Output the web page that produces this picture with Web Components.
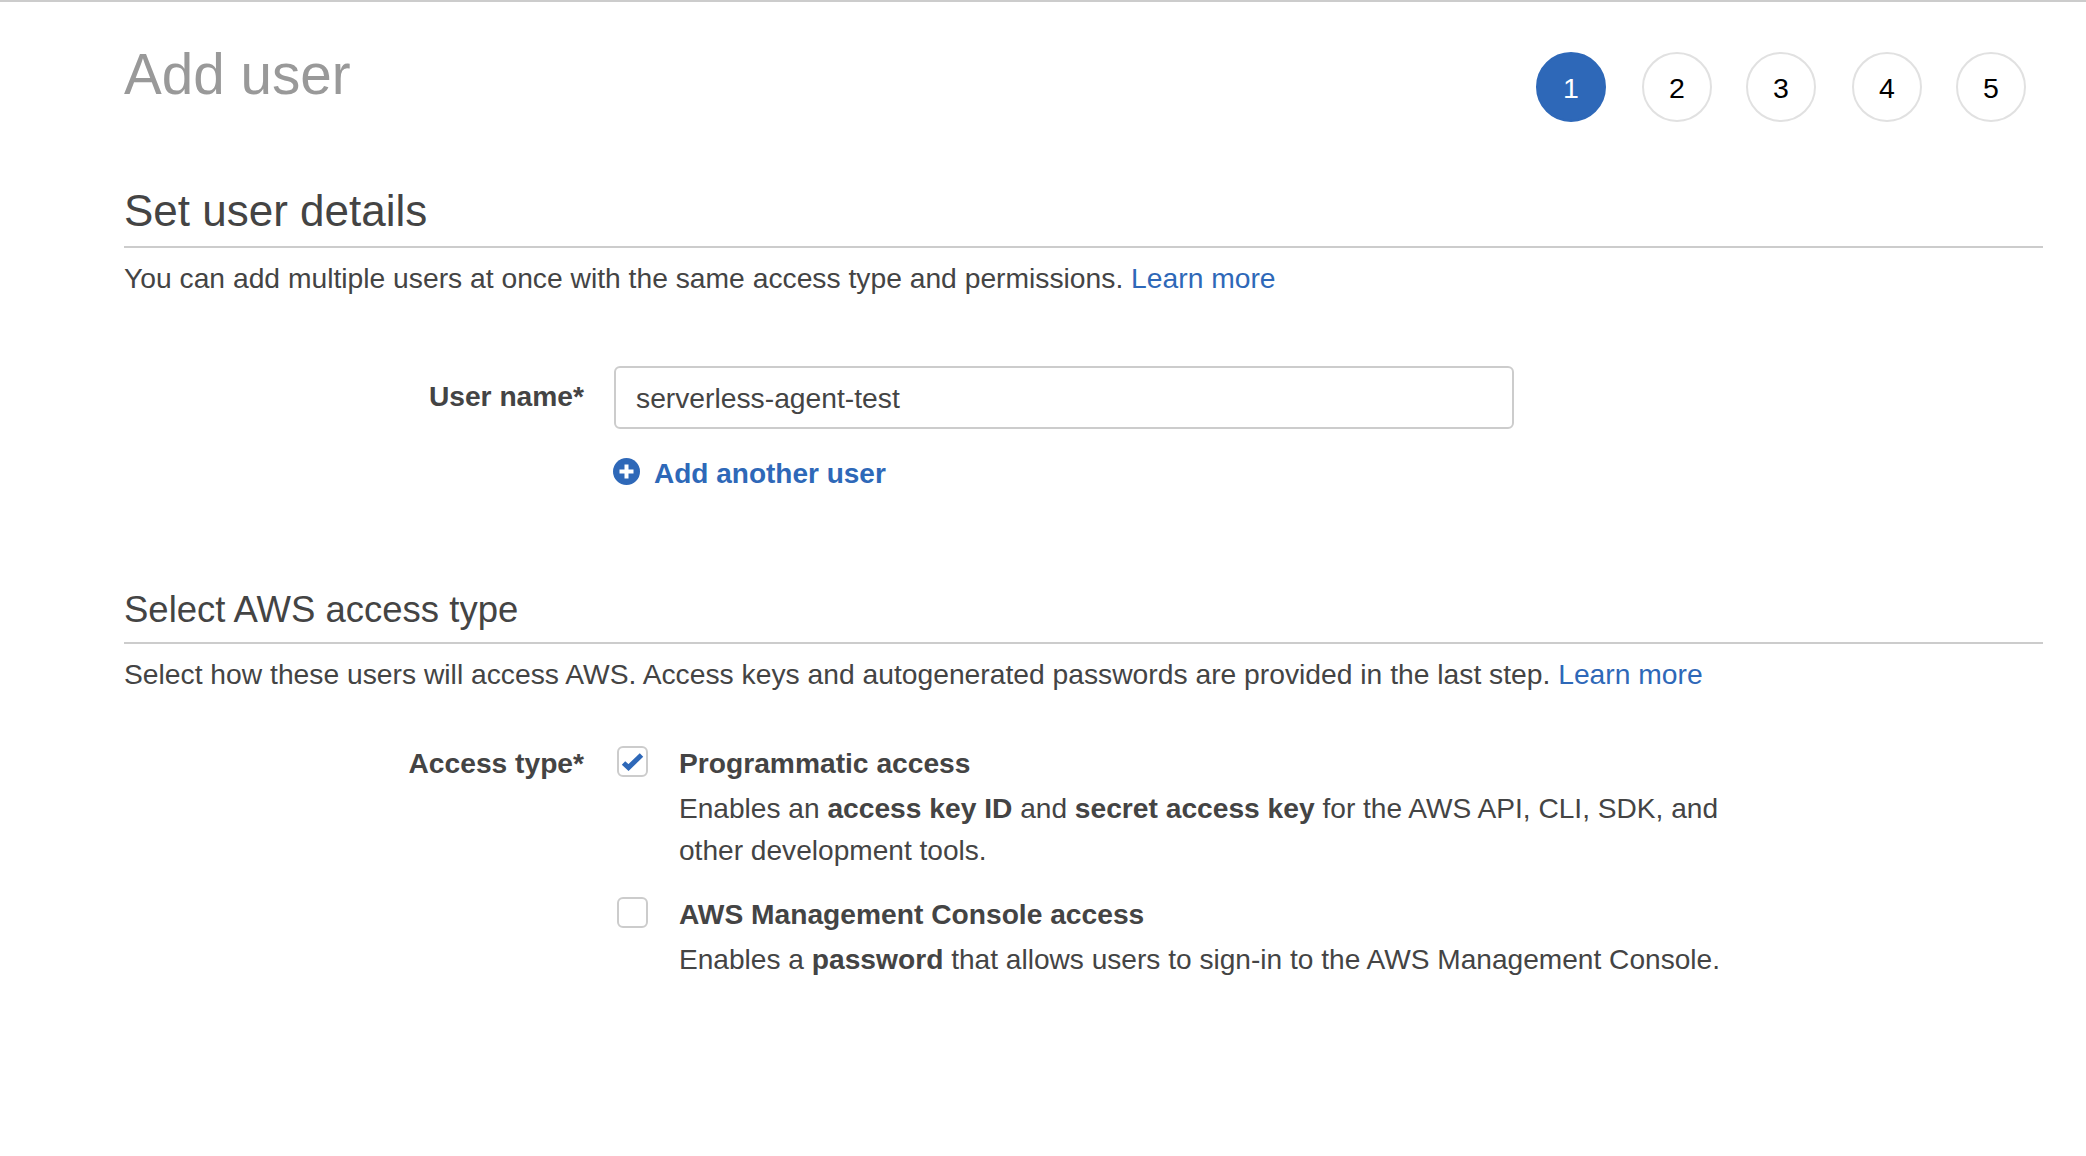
<!DOCTYPE html>
<html lang="en">
<head>
<meta charset="utf-8">
<title>Add user</title>
<style>
  html, body { margin: 0; background: #fff; }
  body { font: 28.25px/42px "Liberation Sans", Arial, sans-serif; color: #444; }
  b { font-weight: 700; font-size: 28.2px; }
</style>
</head>
<body>
<add-user-page>
  <page-header title-text="Add user" steps="5" current="1"></page-header>

  <section-head size="large" style="margin-top:63px">Set user details</section-head>
  <help-text>You can add multiple users at once with the same access type and permissions. <text-link>Learn more</text-link></help-text>

  <form-row label="User name*" style="margin-top:67px">
    <text-field>serverless-agent-test</text-field>
    <add-link>Add another user</add-link>
  </form-row>

  <section-head style="margin-top:90px">Select AWS access type</section-head>
  <help-text>Select how these users will access AWS. Access keys and autogenerated passwords are provided in the last step. <text-link>Learn more</text-link></help-text>

  <form-row label="Access type*" style="margin-top:39px">
    <check-option checked heading="Programmatic access">Enables an <b>access key ID</b> and <b>secret access key</b> for the AWS API, CLI, SDK, and<br>other development tools.</check-option>
    <check-option heading="AWS Management Console access">Enables a <b>password</b> that allows users to sign-in to the AWS Management Console.</check-option>
  </form-row>
</add-user-page>

<script>
class AddUserPage extends HTMLElement {
  constructor() {
    super()
    this.attachShadow({ mode: 'open' }).innerHTML = `
      <style>
        :host { display: block; border-top: 2px solid #ccc; padding: 0 43px 0 124px; min-height: 1154px; box-sizing: border-box; }
      </style>
      <slot></slot>`
  }
}

class PageHeader extends HTMLElement {
  connectedCallback() {
    const count = Number(this.getAttribute('steps'))
    const current = Number(this.getAttribute('current'))
    let steps = ''
    for (let i = 1; i <= count; i++) {
      steps += `<li class="${i === current ? 'on' : ''}">${i}</li>`
    }
    this.attachShadow({ mode: 'open' }).innerHTML = `
      <style>
        :host { display: flex; justify-content: space-between; align-items: flex-start; padding-right: 17px; }
        h1 { margin: 40px 0 0; font-size: 56.6px; line-height: 66px; font-weight: 400; color: #999; }
        ol { display: flex; gap: 35px; list-style: none; margin: 50px 0 0; padding: 0; }
        li { width: 70px; height: 70px; box-sizing: border-box; border: 2px solid #e1e1e1; border-radius: 50%; padding-top: 2px;
             display: flex; align-items: center; justify-content: center; font-size: 28.5px; color: #000; }
        li:nth-child(even) { margin: 0 -1px 0 1px; }
        li.on { background: #2e68b8; border-color: #2e68b8; color: #fff; }
      </style>
      <h1>${this.getAttribute('title-text')}</h1>
      <ol>${steps}</ol>`
  }
}

class SectionHead extends HTMLElement {
  constructor() {
    super()
    this.attachShadow({ mode: 'open' }).innerHTML = `
      <style>
        :host { display: block; border-bottom: 2px solid #ccc; padding-bottom: 8px; font-size: 36.5px; line-height: 49px; }
        :host([size="large"]) { font-size: 44px; line-height: 52px; padding-bottom: 9px; }
      </style>
      <slot></slot>`
  }
}

class HelpText extends HTMLElement {
  constructor() {
    super()
    this.attachShadow({ mode: 'open' }).innerHTML = `
      <style>:host { display: block; margin-top: 9px; }</style>
      <slot></slot>`
  }
}

class TextLink extends HTMLElement {
  constructor() {
    super()
    this.attachShadow({ mode: 'open' }).innerHTML = `
      <style>:host { color: #2e68b8; cursor: pointer; }</style>
      <slot></slot>`
  }
}

class FormRow extends HTMLElement {
  connectedCallback() {
    this.attachShadow({ mode: 'open' }).innerHTML = `
      <style>
        :host { display: grid; grid-template-columns: 460px 1fr; column-gap: 30px; }
        label { text-align: right; font-weight: 700; font-size: 28.2px; padding-top: 8px; }
        :host([label^="User"]) label { padding-top: 9px; }
      </style>
      <label>${this.getAttribute('label')}</label>
      <div><slot></slot></div>`
  }
}

class TextField extends HTMLElement {
  constructor() {
    super()
    this.attachShadow({ mode: 'open' }).innerHTML = `
      <style>
        :host { display: flex; align-items: center; width: 900px; height: 63px; box-sizing: border-box;
                border: 2px solid #ccc; border-radius: 6px; padding: 0 20px; }
      </style>
      <slot></slot>`
  }
}

class AddLink extends HTMLElement {
  constructor() {
    super()
    this.attachShadow({ mode: 'open' }).innerHTML = `
      <style>
        :host { display: flex; align-items: flex-start; gap: 14px; margin: 24px 0 0 -1px; color: #2e68b8; font-size: 28px; font-weight: 700; cursor: pointer; }
        svg { width: 27px; height: 27px; margin-top: 5px; flex: none; }
      </style>
      <svg viewBox="0 0 27 27"><circle cx="13.5" cy="13.5" r="13.5" fill="#2e68b8"/><path d="M13.5 6.5v14M6.5 13.5h14" stroke="#fff" stroke-width="4" fill="none"/></svg>
      <span><slot></slot></span>`
  }
}

class CheckOption extends HTMLElement {
  connectedCallback() {
    const mark = this.hasAttribute('checked')
      ? '<svg viewBox="0 0 31 31"><path d="M6.5 17l5 4.5L24.5 9" stroke="#2e68b8" stroke-width="5" fill="none"/></svg>'
      : ''
    this.attachShadow({ mode: 'open' }).innerHTML = `
      <style>
        :host { display: grid; grid-template-columns: 31px 1fr; column-gap: 31px; padding-top: 8px; margin: 0 0 13px 3px; font-size: 28.1px; }
        .box { width: 31px; height: 31px; box-sizing: border-box; border: 2px solid #ccc; border-radius: 6px; margin-top: 4px; position: relative; }
        .box svg { position: absolute; left: -2px; top: -2px; width: 31px; height: 31px; }
        h3 { margin: 0 0 3px; font-size: 28.2px; line-height: 42px; font-weight: 700; }
      </style>
      <div class="box">${mark}</div>
      <div>
        <h3>${this.getAttribute('heading')}</h3>
        <slot></slot>
      </div>`
  }
}

customElements.define('add-user-page', AddUserPage)
customElements.define('page-header', PageHeader)
customElements.define('section-head', SectionHead)
customElements.define('help-text', HelpText)
customElements.define('text-link', TextLink)
customElements.define('form-row', FormRow)
customElements.define('text-field', TextField)
customElements.define('add-link', AddLink)
customElements.define('check-option', CheckOption)
</script>
</body>
</html>
